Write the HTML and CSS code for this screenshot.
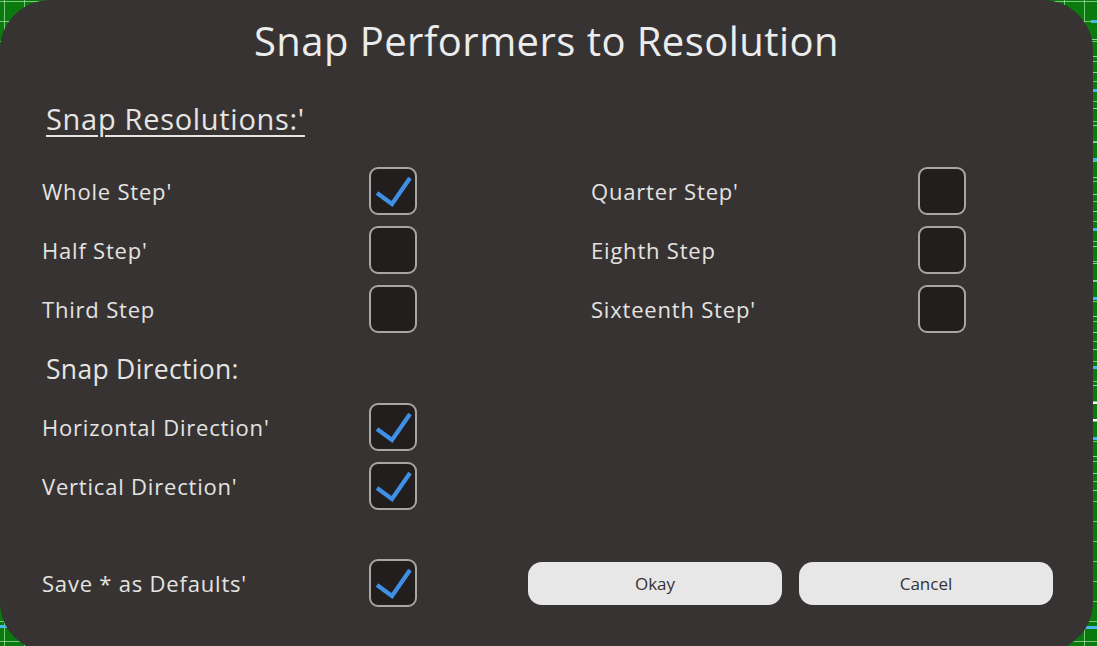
FILE: index.html
```html
<!DOCTYPE html>
<html>
<head>
<meta charset="utf-8">
<link rel="stylesheet" href="styles.css">
</head>
<body>
<div class="stage">
  <div class="ruler">
    <span class="tick blue"></span><span class="tick"></span><span class="tick"></span><span class="tick"></span>
    <span class="tick blue"></span><span class="tick"></span><span class="tick"></span><span class="tick"></span>
    <span class="tick blue"></span><span class="tick"></span><span class="tick"></span><span class="tick"></span>
    <span class="tick blue"></span><span class="tick"></span><span class="tick"></span><span class="tick"></span>
    <span class="tick blue"></span><span class="tick"></span><span class="tick"></span><span class="tick"></span>
    <span class="tick blue"></span><span class="tick"></span><span class="tick white"></span><span class="tick white"></span>
    <span class="tick blue"></span><span class="tick"></span><span class="tick"></span><span class="tick"></span>
  </div>
  <div class="blue-bar left-bar"></div>
  <div class="blue-bar right-bar"></div>
  <div class="dialog">
    <h1 class="title">Snap Performers to Resolution</h1>
    <h2 class="section underline">Snap Resolutions:'</h2>
    <div class="grid">
      <span class="label">Whole Step'</span>
      <span class="box checked"><svg viewBox="0 0 44 44"><path d="M6 24 L21 35 L39 9"/></svg></span>
      <span class="spacer"></span>
      <span class="label">Quarter Step'</span>
      <span class="box"></span>

      <span class="label">Half Step'</span>
      <span class="box"></span>
      <span class="spacer"></span>
      <span class="label">Eighth Step</span>
      <span class="box"></span>

      <span class="label">Third Step</span>
      <span class="box"></span>
      <span class="spacer"></span>
      <span class="label">Sixteenth Step'</span>
      <span class="box"></span>
    </div>
    <h2 class="section dir">Snap Direction:</h2>
    <div class="grid">
      <span class="label">Horizontal Direction'</span>
      <span class="box checked"><svg viewBox="0 0 44 44"><path d="M6 24 L21 35 L39 9"/></svg></span>
      <span class="spacer"></span>
      <span class="label"></span>
      <span class="empty"></span>

      <span class="label">Vertical Direction'</span>
      <span class="box checked"><svg viewBox="0 0 44 44"><path d="M6 24 L21 35 L39 9"/></svg></span>
      <span class="spacer"></span>
      <span class="label"></span>
      <span class="empty"></span>
    </div>
    <div class="footer">
      <span class="label">Save * as Defaults'</span>
      <span class="box checked"><svg viewBox="0 0 44 44"><path d="M6 24 L21 35 L39 9"/></svg></span>
      <div class="buttons">
        <button class="btn">Okay</button>
        <button class="btn">Cancel</button>
      </div>
    </div>
  </div>
</div>
</body>
</html>
```
FILE: styles.css
```css
html, body {
  margin: 0;
  padding: 0;
  width: 1097px;
  height: 646px;
  overflow: hidden;
}
body {
  font-family: "Open Sans", "Noto Sans", sans-serif;
  background-color: #0a7a0f;
  background-image:
    repeating-linear-gradient(90deg, transparent 0 4px, rgba(170,230,170,0.7) 4px 5px, transparent 5px 20px),
    repeating-linear-gradient(0deg, transparent 0 4px, rgba(170,230,170,0.7) 4px 5px, transparent 5px 20px);
}
.stage {
  position: relative;
  width: 1097px;
  height: 646px;
}
.ruler {
  position: absolute;
  right: 0;
  top: 20px;
  width: 6px;
  display: flex;
  flex-direction: column;
  gap: 15.8px;
}
.tick {
  display: block;
  height: 1px;
  background: #9ad0a8;
}
.tick.blue { height: 3px; background: #47b7e6; }
.tick.white { height: 2px; background: #ffffff; }
.blue-bar {
  position: absolute;
  height: 3px;
  background: #4ab6e8;
}
.left-bar { left: 0; top: 625px; width: 14px; }
.right-bar { left: 1075px; top: 626px; width: 22px; }
.dialog {
  position: absolute;
  left: 0;
  top: 0;
  width: 1093px;
  height: 652px;
  box-sizing: border-box;
  background: #373332;
  border-radius: 50px;
  color: #e6e5e4;
  padding: 0 0 0 42px;
}
.title {
  margin: 0;
  padding: 13px 0 0 0;
  font-size: 40px;
  letter-spacing: 0.45px;
  font-weight: 400;
  line-height: 56px;
  text-align: center;
  margin-left: -42px;
  color: #ececec;
}
.section {
  margin: 0;
  font-weight: 400;
  font-size: 29px;
  letter-spacing: 0.7px;
  line-height: 40px;
  padding-left: 4px;
  color: #e6e5e4;
}
.underline {
  margin-top: 30px;
  text-decoration: underline;
  text-decoration-thickness: 2px;
  text-underline-offset: 5px;
  margin-bottom: 28px;
}
.dir {
  margin-top: 16px;
  font-size: 26.5px;
  letter-spacing: 0.3px;
  margin-bottom: 14px;
}
.grid {
  display: grid;
  grid-template-columns: 327px 48px 174px 327px 48px;
  grid-auto-rows: 48px;
  row-gap: 11px;
  align-items: center;
}
.label {
  font-size: 22px;
  letter-spacing: 0.8px;
  color: #e4e3e2;
}
.box {
  box-sizing: border-box;
  width: 48px;
  height: 48px;
  border: 2px solid #a8a5a4;
  border-radius: 9px;
  background: #221e1d;
  display: flex;
}
.box svg {
  width: 44px;
  height: 44px;
}
.box path {
  fill: none;
  stroke: #3f8fe6;
  stroke-width: 4.2;
  stroke-linecap: butt;
  stroke-linejoin: miter;
}
.footer {
  display: grid;
  grid-template-columns: 327px 48px 1fr;
  align-items: center;
  margin-top: 49px;
  height: 48px;
}
.buttons {
  display: flex;
  gap: 17px;
  padding-left: 111px;
  margin-top: 1px;
}
.btn {
  width: 254px;
  height: 43px;
  border: none;
  border-radius: 14px;
  background: #e7e7e7;
  font-family: "Open Sans", "Noto Sans", sans-serif;
  font-size: 17px;
  color: #333;
  padding: 0;
}
```
